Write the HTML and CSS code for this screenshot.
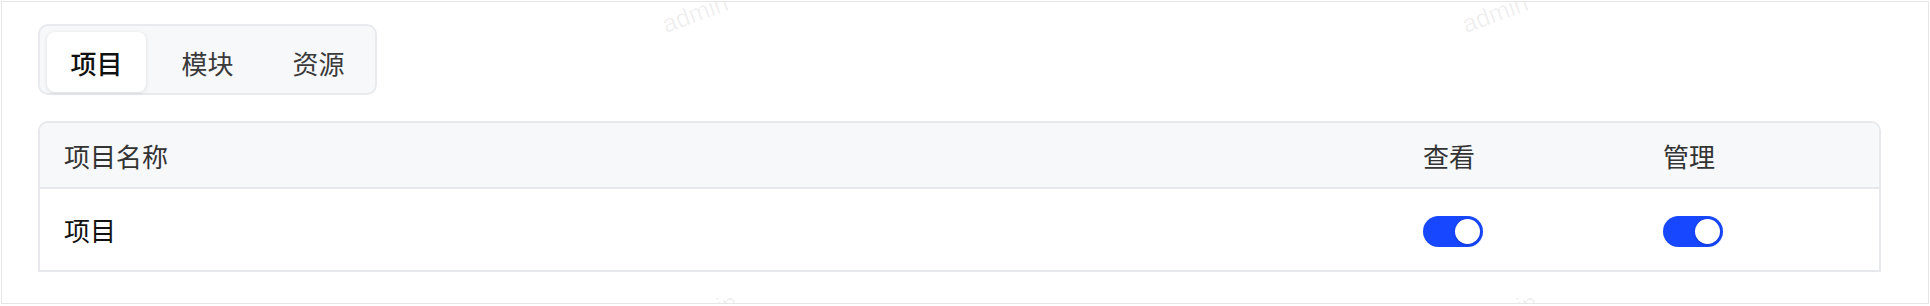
FILE: index.html
```html
<!DOCTYPE html>
<html lang="zh-CN">
<head>
<meta charset="utf-8">
<link rel="stylesheet" href="styles.css">
</head>
<body>
<div class="card">
  <div class="segmented">
    <div class="seg-item active">项目</div>
    <div class="seg-item">模块</div>
    <div class="seg-item">资源</div>
  </div>
  <div class="table">
    <div class="row head">
      <div class="cell name">项目名称</div>
      <div class="cell col">查看</div>
      <div class="cell col">管理</div>
    </div>
    <div class="row body">
      <div class="cell name">项目</div>
      <div class="cell col"><span class="switch on"><span class="knob"></span></span></div>
      <div class="cell col"><span class="switch on"><span class="knob"></span></span></div>
    </div>
  </div>
  <span class="wm wm1">admin</span>
  <span class="wm wm2">admin</span>
  <span class="wm wm3">admin</span>
  <span class="wm wm4">admin</span>
</div>
</body>
</html>
```

FILE: styles.css
```css
* { box-sizing: border-box; }
html, body { margin: 0; padding: 0; background: #ffffff; }
body {
  padding: 1px;
  font-family: "Noto Sans CJK SC", "Noto Sans", sans-serif;
  color: #1f1f1f;
  width: 1930px;
  height: 306px;
  overflow: hidden;
}
.card {
  position: relative;
  width: 1928px;
  height: 303px;
  border: 1px solid #e6e6e6;
  padding: 22px 46px 0 36px;
  overflow: hidden;
}
.segmented {
  display: inline-flex;
  gap: 12px;
  padding: 6px 7px 5px 7px;
  background: #f7f8fa;
  border: 2px solid #e8eaee;
  border-radius: 10px;
  width: 339px;
  height: 71px;
}
.seg-item {
  width: 100px;
  height: 60px;
  display: flex;
  align-items: center;
  justify-content: center;
  font-size: 26px;
  color: #3a3a3a;
  border-radius: 8px;
}
.seg-item.active {
  background: #ffffff;
  color: #111111;
  font-weight: 500;
  box-shadow: 0 1px 4px rgba(0,0,0,0.12);
}
.table {
  margin-top: 26px;
  width: 1843px;
  border: 2px solid #e6e8ec;
  border-radius: 10px 10px 0 0;
  overflow: hidden;
}
.row { display: flex; align-items: center; }
.row.head {
  height: 66px;
  background: #f7f8fa;
  border-bottom: 2px solid #e6e8ec;
  color: #333333;
}
.row.body { height: 81px; color: #111111; }
.cell { font-size: 26px; padding-left: 24px; }
.cell.name { flex: 1; }
.cell.col { width: 240px; display: flex; align-items: center; }
.row.body .cell.col { padding-top: 3px; }
.switch {
  display: inline-block;
  position: relative;
  width: 60px;
  height: 31px;
  border-radius: 16px;
  background: #1747ff;
}
.knob {
  position: absolute;
  top: 3px;
  right: 3px;
  width: 25px;
  height: 25px;
  border-radius: 50%;
  background: #ffffff;
  box-shadow: 0 1px 3px rgba(0,0,0,0.2);
}
.wm {
  position: absolute;
  font-family: "Liberation Sans", Arial, sans-serif;
  font-size: 25px;
  color: rgba(0,0,0,0.07);
  transform: rotate(-20deg);
  pointer-events: none;
}
.wm1 { left: 659px; top: -3px; }
.wm2 { left: 1459px; top: -3px; }
.wm3 { left: 668px; top: 296px; }
.wm4 { left: 1468px; top: 296px; }
```
